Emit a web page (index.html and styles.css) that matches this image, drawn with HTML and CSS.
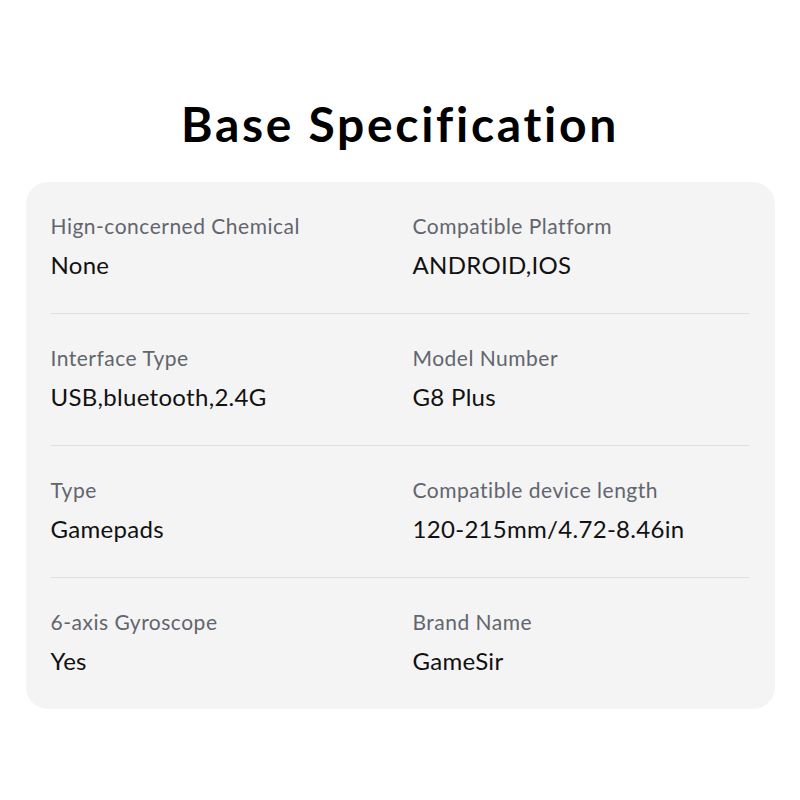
FILE: index.html
```html
<!DOCTYPE html>
<html>
<head>
<meta charset="utf-8">
<link rel="stylesheet" href="styles.css">
</head>
<body>
<main class="page">
  <h1 class="title">Base Specification</h1>
  <section class="card">
    <div class="row">
      <div class="cell"><div class="label">Hign-concerned Chemical</div><div class="value">None</div></div>
      <div class="cell"><div class="label">Compatible Platform</div><div class="value">ANDROID,IOS</div></div>
    </div>
    <div class="row">
      <div class="cell"><div class="label">Interface Type</div><div class="value">USB,bluetooth,2.4G</div></div>
      <div class="cell"><div class="label">Model Number</div><div class="value">G8 Plus</div></div>
    </div>
    <div class="row">
      <div class="cell"><div class="label">Type</div><div class="value">Gamepads</div></div>
      <div class="cell"><div class="label">Compatible device length</div><div class="value">120-215mm/4.72-8.46in</div></div>
    </div>
    <div class="row">
      <div class="cell"><div class="label">6-axis Gyroscope</div><div class="value">Yes</div></div>
      <div class="cell"><div class="label">Brand Name</div><div class="value">GameSir</div></div>
    </div>
  </section>
</main>
</body>
</html>
```

FILE: styles.css
```css
html, body {
  margin: 0;
  padding: 0;
  background: #ffffff;
}
body {
  font-family: "Lato", "Open Sans", sans-serif;
  color: #111111;
}
.page {
  width: 800px;
  height: 800px;
  display: flex;
  flex-direction: column;
  align-items: center;
}
.title {
  margin: 92px 0 0 0;
  height: 90px;
  font-size: 48px;
  line-height: 64px;
  font-weight: 700;
  color: #000000;
  letter-spacing: 2.7px;
}
.card {
  width: 749px;
  box-sizing: border-box;
  background: #f4f4f4;
  border-radius: 22px;
  padding: 0 26px 0 25px;
}
.row {
  display: grid;
  grid-template-columns: 362px 1fr;
  padding: 32px 0 33px 0;
  border-bottom: 1px solid #e0e0e0;
}
.row:last-child {
  border-bottom: none;
  padding-bottom: 33px;
}
.label {
  font-size: 21px;
  line-height: 24px;
  color: #62656e;
  letter-spacing: 0.5px;
}
.value {
  margin-top: 12px;
  font-size: 24px;
  line-height: 30px;
  color: #111111;
  letter-spacing: 0.3px;
}
```
